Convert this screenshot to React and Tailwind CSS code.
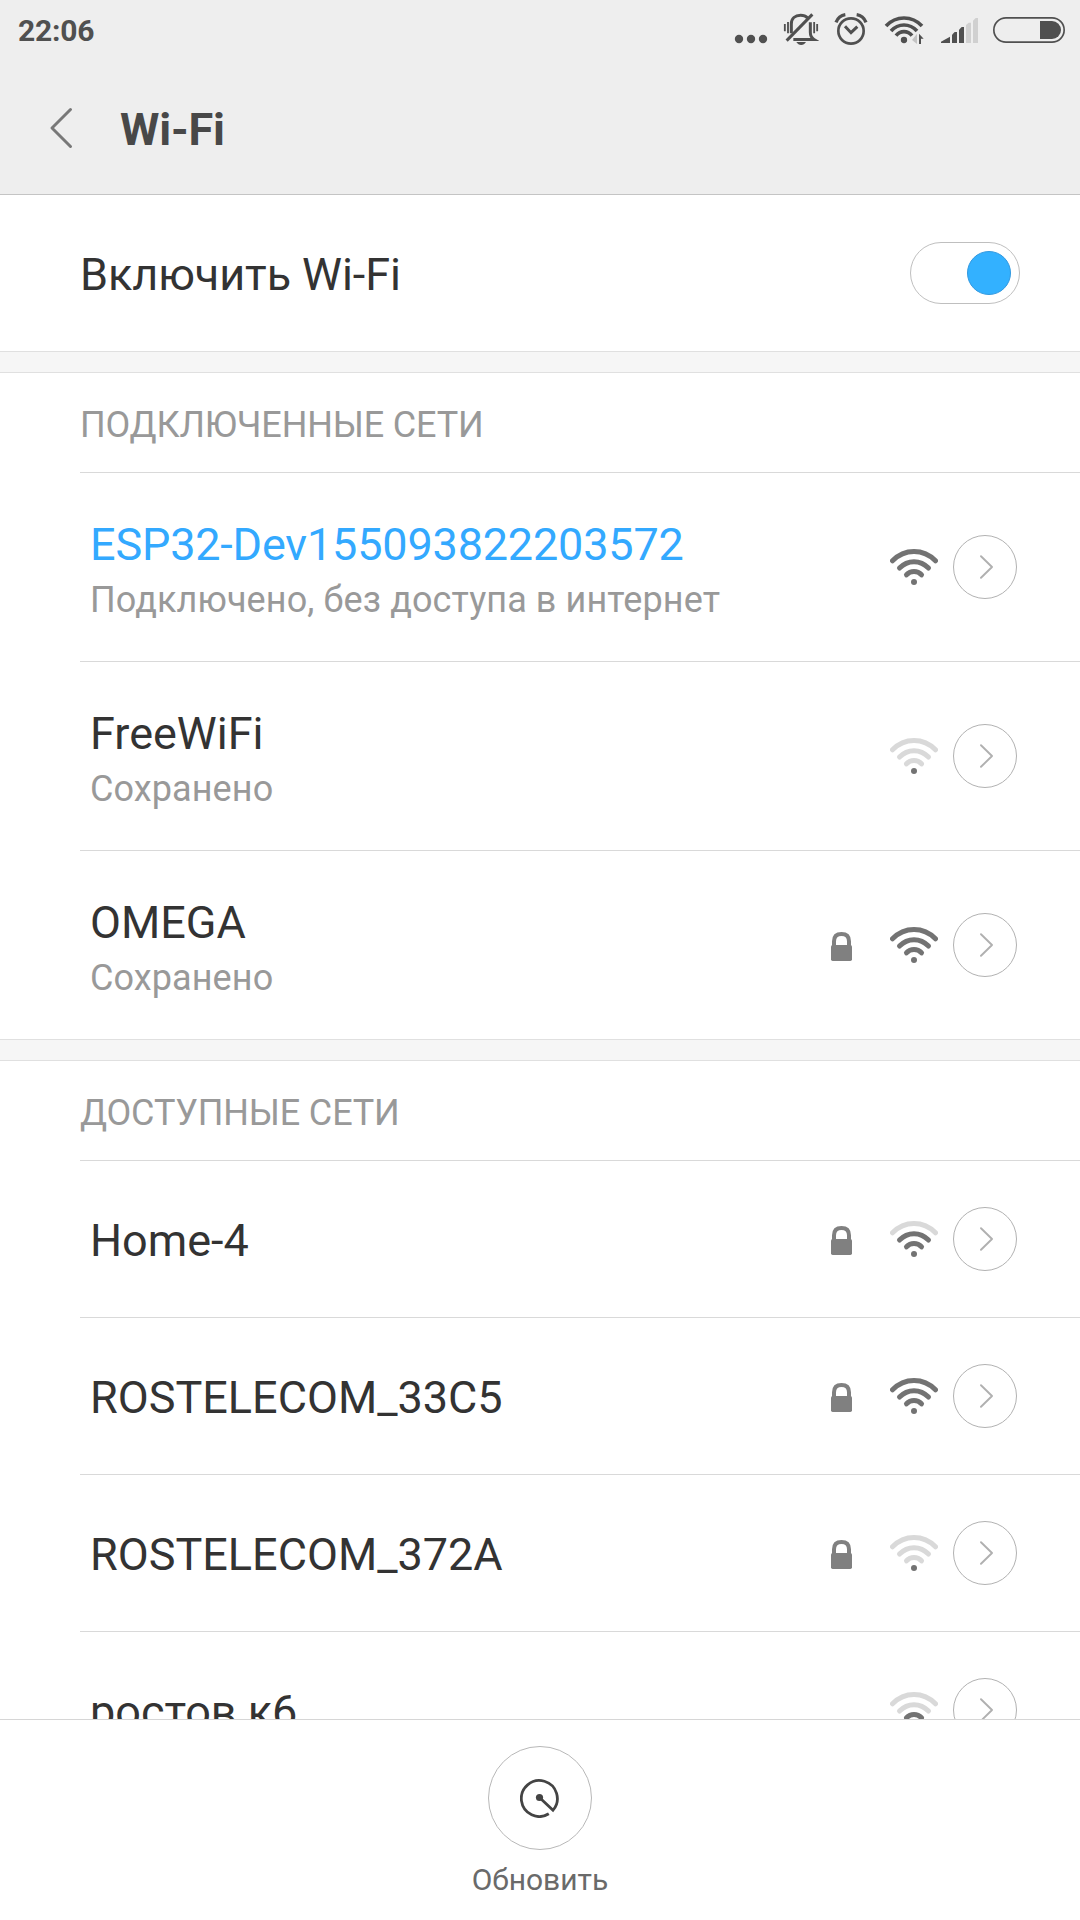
const STATUS = "#505050";

function DotsIcon() {
  return (
    <svg className="h-[34px] w-[34px]" viewBox="42 36 102 102" fill={STATUS}>
      <circle cx="57" cy="117" r="12.5" />
      <circle cx="93" cy="117" r="12.5" />
      <circle cx="129" cy="117" r="12.5" />
    </svg>
  );
}

function MutedBellIcon() {
  return (
    <svg className="ml-[15px] h-[34px] w-9" viewBox="189 36 108 102" fill="none" stroke={STATUS} strokeWidth="9">
      <path d="M194.5 72V94M204 66V100M282.5 66V100M291.5 72V94" strokeWidth="5.5" />
      <path d="M214 100V72C214 55 225 46 242 46C251 46 258 49 263 54" />
      <path d="M271 67V97C271 109 276 115 282 118.500H220" />
      <path d="M200 122L277 43" />
      <path d="M229 126H258C254 132 250 135 243.500 135S233 132 229 126Z" fill={STATUS} stroke="none" />
    </svg>
  );
}

function AlarmIcon() {
  return (
    <svg className="ml-[15px] h-[34px] w-[34px]" viewBox="342 36 102 102" fill="none" stroke={STATUS} strokeWidth="8">
      <circle cx="393" cy="93" r="38" />
      <path d="M375 79L393 98L412 80" strokeWidth="9" />
      <path d="M348 67C353 55 363 46 376 44M438 67C433 55 423 46 410 44" strokeWidth="10" />
    </svg>
  );
}

function StatusWifiIcon() {
  return (
    <svg className="ml-4 h-[34px] w-10" viewBox="492 36 120 102" fill="none" stroke={STATUS} strokeWidth="11">
      <path d="M498 78C528 46 576 46 606 78M513 93C535 69 569 69 591 93M528 107C541 91 563 91 576 107" />
      <circle cx="552" cy="120" r="9.500" fill={STATUS} stroke="none" />
      <path d="M591 101V132L576 120Z" fill="#c4c4c4" stroke="none" />
      <path d="M597 101L611 116H603V132H597Z" fill={STATUS} stroke="none" />
    </svg>
  );
}

function SignalIcon() {
  return (
    <svg className="ml-4 h-[34px] w-[39px]" viewBox="660 36 117 102" fill={STATUS}>
      <path d="M663 129V125L690 110V129Z" />
      <path d="M696 129V104L704 96H711V129Z" />
      <path d="M717 129V89L725 81H732V129Z" />
      <path d="M738 129V75L746 68H753V129ZM759 129V62L767 54H774V129Z" fill="#d0d0d0" />
    </svg>
  );
}

function BatteryIcon() {
  return (
    <svg className="ml-[13px] h-[34px] w-[74px]" viewBox="816 36 222 102">
      <rect x="821.500" y="53.500" width="211" height="73" rx="36.500" fill="none" stroke={STATUS} strokeWidth="5" />
      <path d="M960 63H996A27 27 0 0 1 996 117H960Z" fill={STATUS} />
    </svg>
  );
}

function WifiIcon({ level }) {
  const tone = (n) => (level >= n ? "#737373" : "#d9d9d9");
  return (
    <svg className="h-9 w-12" viewBox="0 0 144 108" fill="none" strokeWidth="15" strokeLinecap="round">
      <path d="M7.500 35.500C44 -1.500 100 -1.500 136.500 35.500" stroke={tone(3)} />
      <path d="M28.500 57C53 31.500 91 31.500 115.500 57" stroke={tone(2)} />
      <path d="M49.500 77.500C62 64.500 82 64.500 94.500 77.500" stroke={tone(1)} />
      <circle cx="72" cy="99" r="9" fill="#737373" />
    </svg>
  );
}

function LockIcon() {
  return (
    <svg className="mt-[3px] mr-[38px] h-[29px] w-[21px]" viewBox="0 0 63 87">
      <path d="M9 42V28C9 13 18 6 31.500 6S54 13 54 28V42" fill="none" stroke="#808080" strokeWidth="12" />
      <rect y="39" width="63" height="48" rx="5" fill="#808080" />
    </svg>
  );
}

function DetailButton() {
  return (
    <button aria-label="Подробнее" className="ml-[15px] flex size-16 items-center justify-center rounded-full border border-[#b2b2b2]">
      <svg className="ml-[3px] h-6 w-[13px]" viewBox="0 0 13 24" fill="none" stroke="#b0b0b0" strokeWidth="1.900" strokeLinecap="round" strokeLinejoin="round">
        <path d="M1 1.200L12 12L1 22.800" />
      </svg>
    </button>
  );
}

function Network({ name, note, level, locked, active, last }) {
  return (
    <li className={`ml-20 flex shrink-0 items-center border-b pr-[63px] ${note ? "h-[189px]" : "h-[157px]"} ${last ? "border-transparent" : "border-[#d9d9d9]"}`}>
      <div className={`flex-1 pl-2.5 ${note ? "pt-[7px]" : "pt-[3px]"}`}>
        <div className={`text-[45px] leading-[53px] ${active ? "tracking-[-0.18px] text-[#33a9ff]" : "text-[#333333]"}`}>{name}</div>
        {note && <div className="mt-[5px] text-[36px] leading-[48px] tracking-[0.1px] text-[#999999]">{note}</div>}
      </div>
      {locked && <LockIcon />}
      <WifiIcon level={level} />
      <DetailButton />
    </li>
  );
}

function SectionTitle({ children }) {
  return (
    <h2 className="ml-20 flex h-[100px] shrink-0 items-center border-b border-[#d9d9d9] pt-1 text-[36px] tracking-[-0.15px] text-[#999999]">{children}</h2>
  );
}

function Divider() {
  return <div className="h-[22px] shrink-0 border-y border-[#e0e0e0] bg-[#f6f6f6]" />;
}

export default function App() {
  return (
    <div className="flex h-[1920px] w-[1080px] flex-col overflow-hidden bg-white font-['Roboto',sans-serif]">
      <header className="h-[195px] shrink-0 border-b border-[#c4c4c4] bg-[#eeeeee]">
        <div className="flex h-[60px] items-start pr-3.5 pl-[18px] pt-3">
          <span className="mr-auto text-[30px] leading-[37px] font-bold tracking-[-0.2px] text-[#505050]">22:06</span>
          <DotsIcon />
          <MutedBellIcon />
          <AlarmIcon />
          <StatusWifiIcon />
          <SignalIcon />
          <BatteryIcon />
        </div>
        <div className="flex h-[136px] items-center pl-[49px]">
          <svg className="h-[42px] w-6" viewBox="0 0 24 42" fill="none" stroke="#787878" strokeWidth="3" strokeLinecap="round" strokeLinejoin="round">
            <path d="M21.500 2.500L3 21L21.500 39.500" />
          </svg>
          <h1 className="mt-1 ml-[47px] text-[45px] leading-[54px] font-bold tracking-[-0.2px] text-[#484848]">Wi-Fi</h1>
        </div>
      </header>

      <main className="flex min-h-0 flex-1 flex-col overflow-hidden">
        <div className="flex h-[156px] shrink-0 items-center justify-between pr-[60px] pl-20">
          <span className="mt-1 text-[45px] leading-[54px] tracking-[-0.08px] text-[#333333]">Включить Wi-Fi</span>
          <button aria-label="Wi-Fi" className="flex h-[62px] w-[110px] items-center justify-end rounded-full border border-[#bfbfbf] pr-2">
            <span className="size-11 rounded-full border border-[#3299e0] bg-[#33b1ff]" />
          </button>
        </div>
        <Divider />
        <SectionTitle>ПОДКЛЮЧЕННЫЕ СЕТИ</SectionTitle>
        <ul className="flex shrink-0 flex-col">
          <Network name="ESP32-Dev155093822203572" note="Подключено, без доступа в интернет" level={3} active />
          <Network name="FreeWiFi" note="Сохранено" level={0} />
          <Network name="OMEGA" note="Сохранено" level={3} locked last />
        </ul>
        <div className="-mt-px flex shrink-0 flex-col"><Divider /></div>
        <SectionTitle>ДОСТУПНЫЕ СЕТИ</SectionTitle>
        <ul className="flex shrink-0 flex-col">
          <Network name="Home-4" level={2} locked />
          <Network name="ROSTELECOM_33C5" level={3} locked />
          <Network name="ROSTELECOM_372A" level={0} locked />
          <Network name="ростов к6" level={1} last />
        </ul>
      </main>

      <footer className="flex h-[201px] shrink-0 flex-col items-center border-t border-[#d6d6d6] bg-white pt-[26px]">
        <button aria-label="Обновить" className="flex size-[104px] items-center justify-center rounded-full border border-[#b8b8b8]">
          <svg className="-mt-px size-10" viewBox="0 0 40 40" fill="none" stroke="#444444" strokeWidth="2.800">
            <path d="M28.800 35.800A18 18 0 1 1 33 32.200L19.500 19.500" />
            <circle cx="19.500" cy="19.500" r="3.600" fill="#444444" stroke="none" />
          </svg>
        </button>
        <span className="mt-3 text-[30px] leading-[36px] text-[#6a6a6a]">Обновить</span>
      </footer>
    </div>
  );
}
